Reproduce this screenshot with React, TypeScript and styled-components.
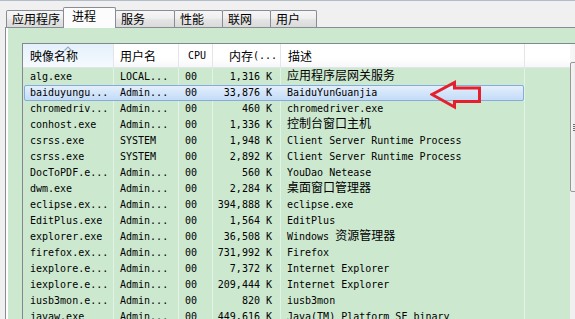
import React from 'react';
import styled, { createGlobalStyle, css } from 'styled-components';

const GREEN = '#cce8cf';
const LINE = '#e2f2e4';
const COLS = [90, 65, 34, 68, 244, 46];
const TEMPLATE = COLS.map((c) => `${c}px`).join(' ');
const LINES = [90, 155, 189, 257, 501];

const Global = createGlobalStyle`
  html, body { margin: 0; padding: 0; background: #f0f0f0; }
  body { font-family: "Noto Sans CJK SC", "DejaVu Sans Mono", sans-serif; }
`;

const Window = styled.div`
  position: relative;
  width: 575px;
  height: 319px;
  overflow: hidden;
  background: #f0f0f0;
  border-top: 1px solid #b3bccb;
  box-sizing: border-box;
  display: flex;
  flex-direction: column;
`;

const TabRow = styled.div`
  display: flex;
  align-items: flex-end;
  height: 26px;
  padding-left: 6px;
  flex: none;
`;

const Tab = styled.div<{ $w: number; $active?: boolean }>`
  box-sizing: border-box;
  flex: none;
  width: ${(p) => p.$w}px;
  height: ${(p) => (p.$active ? 21 : 17)}px;
  margin-right: -1px;
  margin-bottom: ${(p) => (p.$active ? -1 : 0)}px;
  position: relative;
  z-index: ${(p) => (p.$active ? 2 : 1)};
  border: 1px solid #898c95;
  border-bottom: none;
  border-radius: 2px 2px 0 0;
  background: ${(p) =>
    p.$active
      ? '#fcfcfc'
      : 'linear-gradient(#f6f6f6, #efefef 45%, #e4e4e4 55%, #dadada)'};
  padding-left: ${(p) => (p.$active ? 8 : 5)}px;
  font: 12px/16px "Noto Sans CJK SC", sans-serif;
  color: #000;
  white-space: nowrap;
`;

const Page = styled.div`
  flex: 1;
  min-height: 0;
  margin-left: 5px;
  border-top: 1px solid #898c95;
  border-left: 1px solid #898c95;
  background: ${GREEN};
  box-shadow: inset 2px 0 0 #fff;
  padding: 15px 0 0 16px;
`;

const ListBox = styled.div`
  display: flex;
  width: 570px;
  height: 300px;
  border-top: 1px solid #828790;
  border-left: 1px solid #828790;
  background: ${GREEN};
`;

const Table = styled.div`
  width: 547px;
  flex: none;
  display: flex;
  flex-direction: column;
`;

const Header = styled.div`
  display: grid;
  grid-template-columns: ${TEMPLATE};
  height: 24px;
  box-sizing: border-box;
  border-bottom: 1px solid #e2e4e8;
  background: #fff;
  flex: none;
`;

const HeadCell = styled.div<{ $pad: number; $sorted?: boolean; $first?: boolean }>`
  position: relative;
  box-sizing: border-box;
  display: flex;
  align-items: center;
  padding-left: ${(p) => p.$pad}px;
  padding-top: 1px;
  border-left: ${(p) => (p.$first ? 'none' : '1px solid #e3e5e8')};
  background: ${(p) =>
    p.$sorted
      ? 'linear-gradient(#e4f1fb, #eef6fd 60%, #f6fafe)'
      : 'linear-gradient(#ffffff, #ffffff 60%, #f6f7f9)'};
  font: 10px/16px "DejaVu Sans Mono", monospace;
  color: #000;
  white-space: nowrap;
`;

const SortArrow = styled.svg`
  position: absolute;
  top: 2px;
  left: 50%;
  margin-left: -4px;
`;

const Body = styled.div`
  flex: 1;
  padding-top: 1px;
  background-image: ${LINES.map(() => `linear-gradient(${LINE}, ${LINE})`).join(', ')};
  background-size: 1px 100%;
  background-repeat: no-repeat;
  background-position: ${LINES.map((x) => `${x}px 0`).join(', ')};
`;

const Row = styled.div<{ $selected?: boolean }>`
  position: relative;
  display: grid;
  grid-template-columns: ${COLS.slice(0, 5).map((c) => `${c}px`).join(' ')};
  width: 501px;
  height: 16px;
  ${(p) =>
    p.$selected &&
    css`
      &::before {
        content: '';
        position: absolute;
        top: 0;
        bottom: 0;
        left: 1px;
        right: 0;
        box-sizing: border-box;
        border: 1px solid #84acdd;
        border-radius: 2px;
        background: linear-gradient(#e4effc, #d3e5fa 50%, #c4dcf7);
      }
    `}
`;

const Cell = styled.div<{ $right?: boolean }>`
  position: relative;
  box-sizing: border-box;
  padding: ${(p) => (p.$right ? '0 8px 0 0' : '0 0 0 7px')};
  text-align: ${(p) => (p.$right ? 'right' : 'left')};
  font: 10px/16px "DejaVu Sans Mono", monospace;
  color: #000;
  white-space: nowrap;
  height: 16px;
`;

const Cjk = styled.span`
  font-family: "Noto Sans CJK SC", sans-serif;
  font-size: 12px;
  line-height: 1;
`;

const ScrollBar = styled.div`
  width: 17px;
  flex: none;
  background: #f0f0f0;
  display: flex;
  flex-direction: column;
`;

const ScrollButton = styled.div`
  height: 17px;
  box-sizing: border-box;
  background: linear-gradient(90deg, #f7f7f7, #ececec);
`;

const Thumb = styled.div`
  margin-top: 1px;
  height: 130px;
  box-sizing: border-box;
  border: 1px solid #979797;
  border-radius: 2px;
  background: linear-gradient(90deg, #f4f4f4, #e6e6e6 50%, #dadada);
  display: flex;
  flex-direction: column;
  justify-content: center;
  gap: 1px;
  padding-left: 2px;
`;

const Grip = styled.div`
  width: 10px;
  height: 1px;
  background: #6e6e6e;
`;

const Arrow = styled.svg`
  position: absolute;
  left: 430px;
  top: 78px;
`;

const CJK_RE = /([\u3000-\u303f\u3400-\u9fff\uff00-\uffef]+)/;

function Mixed({ text }: { text: string }) {
  return (
    <>
      {text
        .split(CJK_RE)
        .filter(Boolean)
        .map((s, i) =>
          CJK_RE.test(s) ? <Cjk key={i}>{s}</Cjk> : <React.Fragment key={i}>{s}</React.Fragment>
        )}
    </>
  );
}

const TABS: { label: string; w: number; active?: boolean }[] = [
  { label: '应用程序', w: 58 },
  { label: '进程', w: 53, active: true },
  { label: '服务', w: 60 },
  { label: '性能', w: 49 },
  { label: '联网', w: 49 },
  { label: '用户', w: 47 },
];

const HEADS: { label: string; pad: number; sorted?: boolean }[] = [
  { label: '映像名称', pad: 7, sorted: true },
  { label: '用户名', pad: 6 },
  { label: 'CPU', pad: 9 },
  { label: '内存(...', pad: 16 },
  { label: '描述', pad: 7 },
  { label: '', pad: 0 },
];

type Proc = [string, string, string, string, string];

const ROWS: Proc[] = [
  ['alg.exe', 'LOCAL...', '00', '1,316 K', '应用程序层网关服务'],
  ['baiduyungu...', 'Admin...', '00', '33,876 K', 'BaiduYunGuanjia'],
  ['chromedriv...', 'Admin...', '00', '460 K', 'chromedriver.exe'],
  ['conhost.exe', 'Admin...', '00', '1,336 K', '控制台窗口主机'],
  ['csrss.exe', 'SYSTEM', '00', '1,948 K', 'Client Server Runtime Process'],
  ['csrss.exe', 'SYSTEM', '00', '2,892 K', 'Client Server Runtime Process'],
  ['DocToPDF.e...', 'Admin...', '00', '560 K', 'YouDao Netease'],
  ['dwm.exe', 'Admin...', '00', '2,284 K', '桌面窗口管理器'],
  ['eclipse.ex...', 'Admin...', '00', '394,888 K', 'eclipse.exe'],
  ['EditPlus.exe', 'Admin...', '00', '1,564 K', 'EditPlus'],
  ['explorer.exe', 'Admin...', '00', '36,508 K', 'Windows 资源管理器'],
  ['firefox.ex...', 'Admin...', '00', '731,992 K', 'Firefox'],
  ['iexplore.e...', 'Admin...', '00', '7,372 K', 'Internet Explorer'],
  ['iexplore.e...', 'Admin...', '00', '209,444 K', 'Internet Explorer'],
  ['iusb3mon.e...', 'Admin...', '00', '820 K', 'iusb3mon'],
  ['javaw.exe', 'Admin...', '00', '449,616 K', 'Java(TM) Platform SE binary'],
];

export default function App() {
  return (
    <>
      <Global />
      <Window>
        <TabRow>
          {TABS.map((t) => (
            <Tab key={t.label} $w={t.w} $active={t.active}>
              {t.label}
            </Tab>
          ))}
        </TabRow>
        <Page>
          <ListBox>
            <Table>
              <Header>
                {HEADS.map((h, i) => (
                  <HeadCell key={i} $pad={h.pad} $sorted={h.sorted} $first={i === 0}>
                    {h.sorted && (
                      <SortArrow width="8" height="5" viewBox="0 0 8 5">
                        <path d="M0.5 4.5 L4 1 L7.5 4.5" fill="none" stroke="#9aabc2" strokeWidth="1.2" />
                      </SortArrow>
                    )}
                    <Mixed text={h.label} />
                  </HeadCell>
                ))}
              </Header>
              <Body>
                {ROWS.map((r, i) => (
                  <Row key={i} $selected={i === 1}>
                    <Cell>{r[0]}</Cell>
                    <Cell>{r[1]}</Cell>
                    <Cell>{r[2]}</Cell>
                    <Cell $right>{r[3]}</Cell>
                    <Cell>
                      <Mixed text={r[4]} />
                    </Cell>
                  </Row>
                ))}
              </Body>
            </Table>
            <ScrollBar>
              <ScrollButton />
              <Thumb>
                <Grip />
                <Grip />
                <Grip />
                <Grip />
              </Thumb>
            </ScrollBar>
          </ListBox>
        </Page>
        <Arrow width="54" height="32" viewBox="0 0 54 32">
          <path
            d="M2 15.5 L24.5 3.5 L24.5 9 L49.5 9 L49.5 22.5 L24.5 22.5 L24.5 28 Z"
            fill="none"
            stroke="#e3202b"
            strokeWidth="3"
            strokeLinejoin="miter"
          />
        </Arrow>
      </Window>
    </>
  );
}
